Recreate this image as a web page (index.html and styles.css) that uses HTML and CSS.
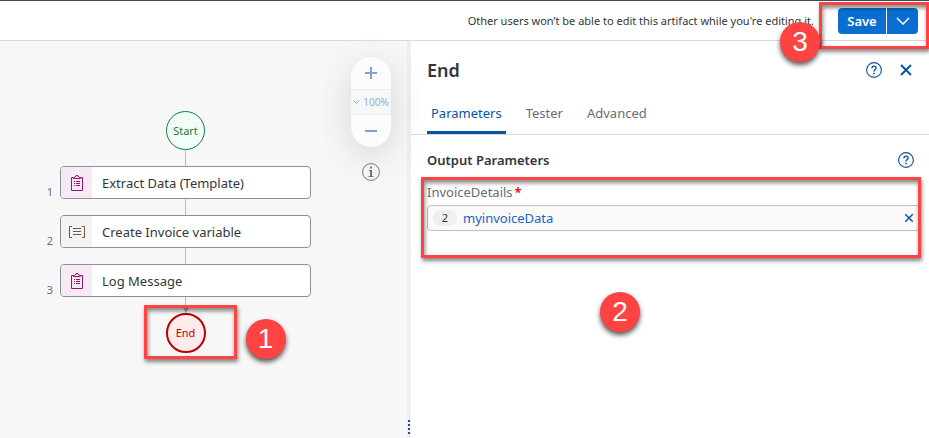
FILE: index.html
```html
<!DOCTYPE html>
<html lang="en">
<head>
<meta charset="utf-8">
<title>Process editor</title>
<link rel="stylesheet" href="styles.css">
</head>
<body>
<svg class="defs" width="0" height="0" aria-hidden="true">
  <symbol id="help" viewBox="0 0 16 16"><circle cx="8" cy="8" r="7.4" fill="none" stroke="currentColor" stroke-width="1.1"/><path d="M5.9 6.3C5.9 4.9 6.8 4.1 8 4.1S10.1 4.9 10.1 6C10.1 7.5 8 7.6 8 9.6" fill="none" stroke="currentColor" stroke-width="1.4"/><path d="M7.2 10.8h1.6v1.5H7.2z" fill="currentColor"/></symbol>
  <symbol id="close" viewBox="0 0 16 16"><path d="M3 3l10 10M13 3L3 13" stroke="currentColor" stroke-width="2"/></symbol>
  <symbol id="clip" viewBox="0 0 16 16"><g fill="none" stroke="currentColor"><path d="M4.500 2.500H2.500V15.500H13.500V2.500H11.500"/><path d="M4.500 3.500V2.500L6.500 2 7 .6H9L9.500 2 11.500 2.500V3.500Z"/><path d="M7 6.500H11M7 8.500H11M7 10.500H11M5 6.500H6M5 8.500H6M5 10.500H6"/></g></symbol>
  <symbol id="variable" viewBox="0 0 18 16"><g fill="none" stroke="currentColor"><path d="M4 2.500H1.500V13.500H4M14 2.500H16.500V13.500H14"/><path d="M5 4.500H13M5 7.500H13M5 10.500H13" stroke-width="1.200"/></g></symbol>
</svg>
<header class="topbar">
  <p class="notice">Other users won’t be able to edit this artifact while you're editing it.</p>
  <div class="split-button">
    <button class="save" type="button">Save</button>
    <button class="save-menu" type="button" aria-label="Save options"><svg width="14" height="8" viewBox="0 0 14 8"><path d="M1 1l6 6 6-6" fill="none" stroke="currentColor" stroke-width="1.500"/></svg></button>
  </div>
  <div class="frame frame-save"></div>
  <span class="badge badge-save">3</span>
</header>
<main class="workspace">
  <section class="canvas" aria-label="Process">
    <div class="flow">
      <button class="event start" type="button">Start</button>
      <div class="link"></div>
      <div class="step"><span class="num">1</span><span class="icon"><svg width="16" height="16"><use href="#clip"/></svg></span><span class="name">Extract Data (Template)</span></div>
      <div class="link"></div>
      <div class="step variable"><span class="num">2</span><span class="icon"><svg width="18" height="16"><use href="#variable"/></svg></span><span class="name">Create Invoice variable</span></div>
      <div class="link"></div>
      <div class="step"><span class="num">3</span><span class="icon"><svg width="16" height="16"><use href="#clip"/></svg></span><span class="name">Log Message</span></div>
      <div class="link last"></div>
      <div class="end-wrap">
        <button class="event end" type="button">End</button>
        <div class="frame frame-end"></div>
        <span class="badge badge-end">1</span>
      </div>
    </div>
    <div class="tools">
      <div class="zoom">
        <button type="button" aria-label="Zoom in"><svg width="12" height="12"><path d="M6 0v12M0 6h12" stroke="currentColor" stroke-width="2"/></svg></button>
        <button class="level" type="button"><svg width="7" height="4"><path d="M.5 .5l3 3 3-3" fill="none" stroke="currentColor"/></svg>100%</button>
        <button type="button" aria-label="Zoom out"><svg width="12" height="12"><path d="M0 6h12" stroke="currentColor" stroke-width="2"/></svg></button>
      </div>
      <button class="info" type="button" aria-label="Information"><svg width="18" height="18"><circle cx="9" cy="9" r="8.400" fill="none" stroke="currentColor"/><path d="M8 3.500h2v2H8zM7 7h3v6h1.500v1h-5v-1H8V8H7z" fill="currentColor"/></svg></button>
    </div>
  </section>
  <div class="splitter"><i></i><i></i><i></i><i></i></div>
  <section class="panel">
    <div class="panel-head">
      <h1>End</h1>
      <button class="icon-button" type="button" aria-label="Help"><svg width="16" height="16"><use href="#help"/></svg></button>
      <button class="icon-button" type="button" aria-label="Close"><svg width="16" height="16"><use href="#close"/></svg></button>
    </div>
    <nav class="tabs">
      <a class="active" href="#parameters">Parameters</a>
      <a href="#tester">Tester</a>
      <a href="#advanced">Advanced</a>
    </nav>
    <div class="section-head" id="parameters">
      <h2>Output Parameters</h2>
      <button class="icon-button" type="button" aria-label="Help"><svg width="16" height="16"><use href="#help"/></svg></button>
    </div>
    <div class="field">
      <label for="invoice">InvoiceDetails<span class="required">*</span></label>
      <div class="value">
        <span class="token">2</span>
        <input id="invoice" type="text" value="myinvoiceData">
        <button class="icon-button" type="button" aria-label="Clear"><svg width="12" height="12"><use href="#close"/></svg></button>
      </div>
      <div class="frame frame-field"></div>
    </div>
    <span class="badge badge-panel">2</span>
  </section>
</main>
</body>
</html>
```
FILE: styles.css
```css
* { box-sizing: border-box; }
body { margin: 0; min-height: 100vh; display: flex; flex-direction: column; overflow-x: hidden; font: 13px/20px "Noto Sans", "Liberation Sans", sans-serif; color: #32363a; background: #fff; }
button, input { font: inherit; color: inherit; margin: 0; padding: 0; border: 0; background: none; }
button { display: flex; align-items: center; justify-content: center; }
svg { display: block; }
.defs { position: absolute; }
h1, h2, p { margin: 0; font-weight: 600; }

.topbar { position: relative; z-index: 2; display: flex; align-items: center; justify-content: flex-end; gap: 24px; height: 41px; padding: 0 11px; border-top: 1px solid #354a5f; border-bottom: 1px solid #d9d9d9; }
.notice { font-size: 11px; font-weight: 400; white-space: nowrap; }
.split-button { display: flex; gap: 1px; border-radius: 4px; overflow: hidden; color: #fff; }
.split-button button { height: 26px; background: #0a6ed1; }
.save { width: 48px; font-weight: 600; }
.save-menu { width: 31px; }

.frame { position: absolute; border: 3px solid #ff4343; box-shadow: 1px 3px 4px #0007, inset 1px 3px 4px #0007; pointer-events: none; }
.badge { position: absolute; display: flex; align-items: center; justify-content: center; width: 40px; height: 40px; border-radius: 50%; background: #ff4343; color: #fff; box-shadow: 0 3px 5px #000a; font: 28px/40px "Liberation Sans", sans-serif; }
.frame-save { top: 1px; right: 0; width: 110px; height: 47px; }
.badge-save { top: 21px; right: 109px; }

.workspace { flex: 1; display: flex; }
.canvas { position: relative; flex: 0 0 407px; display: flex; align-items: flex-start; justify-content: space-between; padding: 70px 16px 0 60px; background: #f7f7f7; }
.flow { display: flex; flex-direction: column; align-items: center; width: 251px; }
.event { width: 39px; height: 39px; border-radius: 50%; font-size: 11px; }
.start { border: 1px solid #107e3e; background: #f1fdf6; color: #257a46; }
.end { width: 40px; height: 40px; border: 2px solid #b00; background: #ffebeb; color: #b00; }
.link { width: 1px; height: 16px; background: #bbb; }
.last { position: relative; }
.last::after { content: ""; position: absolute; bottom: 0; left: -2px; border: solid transparent; border-width: 5px 3px 0; border-top-color: #aaa; }
.step { position: relative; display: flex; align-items: center; width: 100%; height: 33px; border: 1px solid #89919a; border-radius: 4px; background: #fff; }
.icon { display: flex; align-items: center; justify-content: center; align-self: stretch; width: 31px; border-radius: 3px 0 0 3px; background: #f8eaf5; color: #8b1a73; }
.variable .icon { background: #f3f3f3; color: #6a5a45; }
.name { padding-left: 10px; }
.num { position: absolute; right: 100%; bottom: -4px; margin-right: 8px; font-size: 11px; color: #6a6d70; }
.end-wrap { position: relative; }
.frame-end { top: -8px; left: -22px; width: 93px; height: 54px; }
.badge-end { top: 6px; left: 80px; }

.tools { display: flex; flex-direction: column; align-items: center; gap: 16px; margin-top: -54px; }
.zoom { display: flex; flex-direction: column; width: 40px; height: 90px; border-radius: 20px; background: #fcfcfc; box-shadow: 0 8px 32px #354a5f30; color: #7da4d0; overflow: hidden; }
.zoom button { flex: 1; }
.zoom .level { flex: 0 0 26px; gap: 3px; border: solid #ececec; border-width: 1px 0; background: #f7f7f7; font-size: 10px; color: #91b2d8; }
.info { color: #74777a; }

.splitter { flex: 0 0 4px; display: flex; flex-direction: column; align-items: center; justify-content: flex-end; gap: 2px; padding-bottom: 4px; background: #edeff0; }
.splitter i { width: 2px; height: 2px; background: #2548a0; }

.panel { position: relative; flex: 1; min-width: 0; }
.panel-head { display: flex; align-items: center; gap: 16px; height: 58px; padding: 0 15px 0 16px; }
h1 { flex: 1; font-size: 18px; line-height: 24px; }
.icon-button { color: #0854a0; }
.tabs { display: flex; gap: 16px; height: 36px; padding: 0 16px; border-bottom: 1px solid #d9d9d9; }
.tabs a { padding: 4px 4px 8px; border-bottom: 3px solid transparent; color: #6a6d70; text-decoration: none; }
.tabs .active { color: #0854a0; border-bottom-color: #0854a0; border-radius: 2px 2px 0 0; }
.section-head { display: flex; align-items: center; justify-content: space-between; height: 47px; padding: 3px 15px 0 16px; }
h2 { font-size: 13px; line-height: 20px; }
.field { position: relative; padding: 0 8px 0 16px; height: 76px; }
.field label { display: block; margin-bottom: 3px; line-height: 20px; color: #6a6d70; }
.required { margin-left: 2px; color: #d22; font-weight: 700; }
.value { display: flex; align-items: center; gap: 6px; height: 26px; padding: 0 5px; border: 1px solid #bfbfbf; border-radius: 4px; background: #fafafa; }
.token { width: 24px; border-radius: 8px; background: #edeff0; font-size: 11px; line-height: 16px; text-align: center; }
.value input { flex: 1; min-width: 0; color: #1b62c4; }
.frame-field { top: -5px; left: 10px; right: 8px; height: 81px; }
.badge-panel { top: 251px; left: 189px; }
```
